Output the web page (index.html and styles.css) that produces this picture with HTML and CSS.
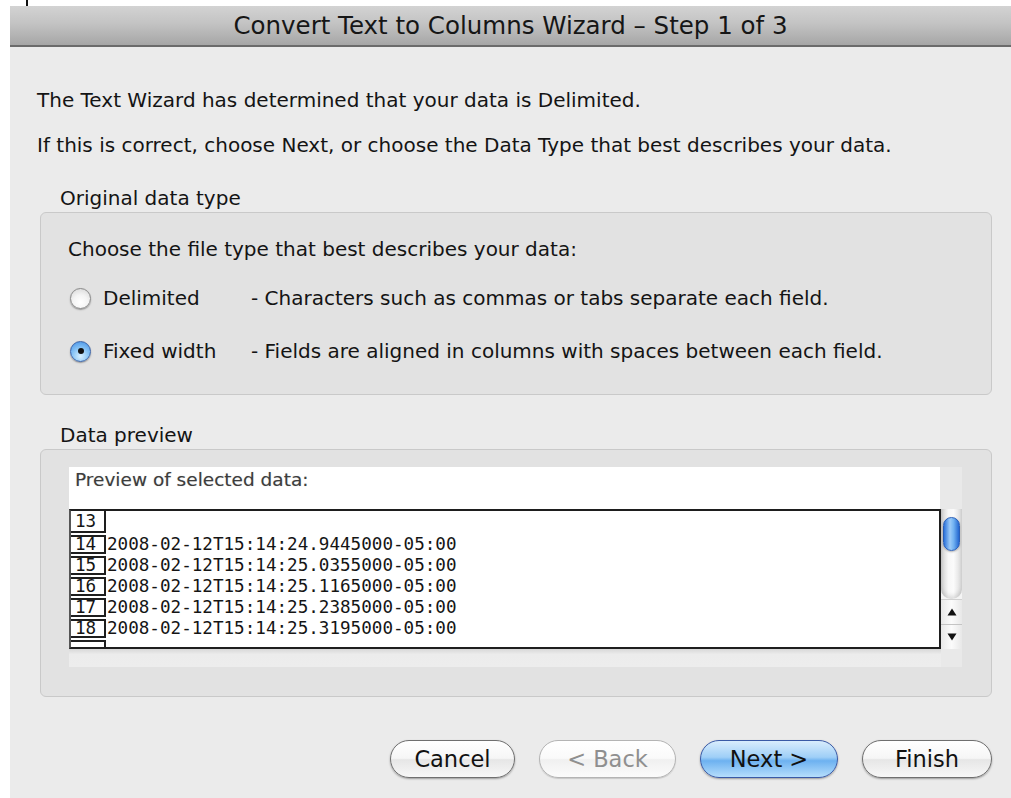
FILE: index.html
```html
<!DOCTYPE html>
<html lang="en">
<head>
<meta charset="utf-8">
<title>Convert Text to Columns Wizard - Step 1 of 3</title>
<link rel="stylesheet" href="styles.css">
</head>
<body>
<div class="screen">
  <div class="tick"></div>
  <div class="dialog">
    <div class="titlebar">Convert Text to Columns Wizard – Step 1 of 3</div>
    <div class="content">
      <p class="msg msg-first">The Text Wizard has determined that your data is Delimited.</p>
      <p class="msg msg-second">If this is correct, choose Next, or choose the Data Type that best describes your data.</p>

      <section class="group group-type">
        <div class="group-label">Original data type</div>
        <div class="group-box type-box">
          <p class="choose">Choose the file type that best describes your data:</p>
          <div class="radio-row row-delimited">
            <span class="radio"></span>
            <span class="radio-label">Delimited</span>
            <span class="radio-desc">- Characters such as commas or tabs separate each field.</span>
          </div>
          <div class="radio-row row-fixed">
            <span class="radio checked"><span class="dot"></span></span>
            <span class="radio-label">Fixed width</span>
            <span class="radio-desc">- Fields are aligned in columns with spaces between each field.</span>
          </div>
        </div>
      </section>

      <section class="group group-preview">
        <div class="group-label">Data preview</div>
        <div class="group-box preview-box">
          <div class="preview">
            <div class="preview-caption">Preview of selected data:</div>
            <div class="preview-body">
              <div class="grid">
                <div class="grid-row"><span class="num">13</span><span class="cell"></span></div>
                <div class="grid-row"><span class="num">14</span><span class="cell">2008-02-12T15:14:24.9445000-05:00</span></div>
                <div class="grid-row"><span class="num">15</span><span class="cell">2008-02-12T15:14:25.0355000-05:00</span></div>
                <div class="grid-row"><span class="num">16</span><span class="cell">2008-02-12T15:14:25.1165000-05:00</span></div>
                <div class="grid-row"><span class="num">17</span><span class="cell">2008-02-12T15:14:25.2385000-05:00</span></div>
                <div class="grid-row"><span class="num">18</span><span class="cell">2008-02-12T15:14:25.3195000-05:00</span></div>
                <div class="grid-row"><span class="num"></span><span class="cell"></span></div>
              </div>
              <div class="vscroll">
                <div class="track"><div class="thumb"></div></div>
                <div class="arrow arrow-up">
                  <svg width="10" height="8" viewBox="0 0 10 8"><path d="M5 0.5 L9.5 7.5 H0.5 Z" fill="#111"/></svg>
                </div>
                <div class="arrow arrow-down">
                  <svg width="10" height="8" viewBox="0 0 10 8"><path d="M0.5 0.5 H9.5 L5 7.5 Z" fill="#111"/></svg>
                </div>
              </div>
            </div>
            <div class="hband"></div>
          </div>
        </div>
      </section>

      <div class="buttons">
        <button class="btn btn-cancel">Cancel</button>
        <button class="btn btn-back" disabled>&lt; Back</button>
        <button class="btn btn-next">Next &gt;</button>
        <button class="btn btn-finish">Finish</button>
      </div>
    </div>
  </div>
</div>
</body>
</html>
```

FILE: styles.css
```css
* {
  box-sizing: border-box;
}

html,
body {
  margin: 0;
  padding: 0;
}

body {
  width: 1011px;
  height: 798px;
  overflow: hidden;
  background: #ffffff;
  font-family: "DejaVu Sans", "Liberation Sans", sans-serif;
  color: #141414;
}

.screen {
  position: relative;
  height: 798px;
  padding: 6px 0 0 10px;
}

/* stray caret mark above the sheet */
.tick {
  position: absolute;
  left: 26px;
  top: 0;
  width: 2px;
  height: 6px;
  background: #111;
}

.dialog {
  height: 792px;
  background: #ebebeb;
}

.titlebar {
  height: 41px;
  border-bottom: 2px solid #6b6b6b;
  background: linear-gradient(#d3d3d3 0%, #c3c3c3 45%, #a6a6a6 100%);
  text-align: center;
  font-size: 24.5px;
  line-height: 40px;
  color: #161616;
}

.content {
  padding: 41px 19px 0 30px;
}

.msg {
  margin: 0 0 0 -3px;
  font-size: 20px;
  line-height: 24px;
}

.msg-second {
  margin-top: 21px;
}

.group-label {
  padding-left: 20px;
  font-size: 20px;
  line-height: 24px;
  margin-bottom: 2px;
}

.group-type {
  margin-top: 29px;
}

.group-box {
  background: #e2e2e2;
  border: 1px solid #c9c9c9;
  border-radius: 6px;
}

.type-box {
  height: 183px;
  padding: 24px 0 0 27px;
}

.choose {
  margin: 0;
  font-size: 20px;
  line-height: 24px;
}

.radio-row {
  display: flex;
  align-items: center;
  height: 28px;
  font-size: 20px;
}

.row-delimited {
  margin-top: 23px;
}

.row-fixed {
  margin-top: 25px;
}

.radio {
  flex: none;
  width: 21px;
  height: 21px;
  margin-left: 2px;
  border-radius: 50%;
  border: 1px solid #8a8a8a;
  background: radial-gradient(circle at 50% 70%, #ffffff 0%, #f4f4f4 45%, #d4d4d4 100%);
  box-shadow: 0 1px 1.5px rgba(0, 0, 0, 0.35);
  display: flex;
  align-items: center;
  justify-content: center;
}

.radio.checked {
  border-color: #3a63a8;
  background: radial-gradient(circle at 50% 75%, #d8f0ff 0%, #8cc6f5 45%, #3f8ee6 100%);
}

.dot {
  width: 6px;
  height: 6px;
  border-radius: 50%;
  background: #111;
}

.radio-label {
  flex: none;
  width: 148px;
  margin-left: 12px;
}

.radio-desc {
  white-space: nowrap;
}

.group-preview {
  margin-top: 28px;
}

.preview-box {
  height: 248px;
  padding: 17px 29px 0 28px;
}

.preview {
  background: #e9e9e9;
}

.preview-caption {
  width: 871px;
  height: 42px;
  background: #ffffff;
  padding: 1px 0 0 6px;
  font-size: 18.5px;
  line-height: 24px;
  color: #3d3d3d;
  text-shadow: 0 0 1px rgba(0, 0, 0, 0.25);
}

.preview-body {
  display: flex;
  height: 140px;
}

.grid {
  width: 872px;
  height: 140px;
  overflow: hidden;
  background: #ffffff;
  border: 2px solid #1e1e1e;
  border-left-color: #555;
  font-family: "DejaVu Sans Mono", "Liberation Mono", monospace;
  font-size: 17.6px;
  color: #151515;
}

.grid-row {
  display: flex;
  height: 21px;
}

.grid-row:first-child {
  height: 24px;
}

.num {
  flex: none;
  width: 35px;
  height: 19px;
  padding-left: 4px;
  border-top: 2px solid #1e1e1e;
  border-bottom: 2px solid #1e1e1e;
  border-right: 2px solid #1e1e1e;
  line-height: 15px;
}

.grid-row:first-child .num {
  height: 22px;
  border-top: 0;
  line-height: 20px;
}

.cell {
  padding-left: 1px;
  line-height: 19px;
  white-space: pre;
}

.vscroll {
  width: 21px;
  display: flex;
  flex-direction: column;
  background: #f4f4f4;
}

.track {
  height: 90px;
  padding: 8px 2px 0 2px;
  border-radius: 0 0 10px 10px;
  background: linear-gradient(90deg, #cfcfcf 0%, #f7f7f7 35%, #fbfbfb 60%, #d9d9d9 100%);
  box-shadow: inset 0 -3px 4px rgba(0, 0, 0, 0.12);
}

.thumb {
  height: 34px;
  border-radius: 9px;
  border: 1px solid #2a5fb8;
  background: linear-gradient(90deg, #2c73db 0%, #9ccbf8 40%, #6fb0f1 65%, #2467d0 100%);
  box-shadow: 0 1px 2px rgba(0, 0, 0, 0.3);
}

.arrow {
  height: 25px;
  display: flex;
  align-items: center;
  justify-content: center;
  background: linear-gradient(90deg, #e8e8e8, #fbfbfb 50%, #e8e8e8);
}

.arrow-up {
  border-top: 1px solid #d0d0d0;
}

.arrow-down {
  border-top: 1px solid #c4c4c4;
}

.hband {
  height: 18px;
  width: 872px;
  background: linear-gradient(#d8d8d8 0%, #ececec 30%, #ededed 100%);
}

.buttons {
  display: flex;
  justify-content: flex-end;
  gap: 24px;
  margin-top: 43px;
}

.btn {
  height: 38px;
  border-radius: 19px;
  border: 1.5px solid #6f6f6f;
  background: linear-gradient(#ffffff 0%, #f6f6f6 48%, #e6e6e6 52%, #f7f7f7 100%);
  box-shadow: 0 1px 2px rgba(0, 0, 0, 0.35);
  font-family: "DejaVu Sans", "Liberation Sans", sans-serif;
  font-size: 22.5px;
  line-height: 34px;
  color: #111;
  padding: 0;
}

.btn-cancel {
  width: 125px;
}

.btn-back {
  width: 137px;
  border-color: #b4b4b4;
  color: #8f8f8f;
  background: linear-gradient(#ffffff 0%, #fafafa 48%, #f0f0f0 52%, #fbfbfb 100%);
  box-shadow: 0 1px 1px rgba(0, 0, 0, 0.15);
}

.btn-next {
  width: 138px;
  border-color: #3a5aa6;
  background: linear-gradient(#d9edfd 0%, #9fcff7 45%, #6db1f0 55%, #b6defc 100%);
}

.btn-finish {
  width: 130px;
}
```
